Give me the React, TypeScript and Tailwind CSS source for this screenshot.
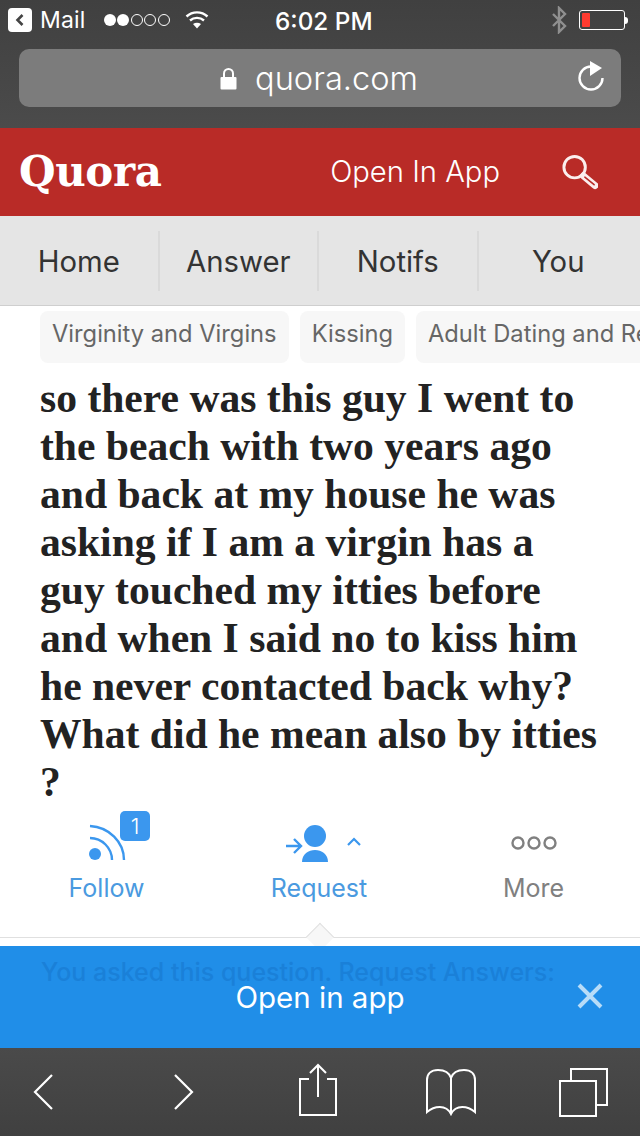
const sans = 'font-["Inter","Liberation_Sans",sans-serif]';

const questionLines = [
  'so there was this guy I went to',
  'the beach with two years ago',
  'and back at my house he was',
  'asking if I am a virgin has a',
  'guy touched my itties before',
  'and when I said no to kiss him',
  'he never contacted back why?',
  'What did he mean also by itties',
  '?',
];

function StatusBar() {
  return (
    <div className="relative flex h-[40px] items-center pl-2 pr-[12px] text-white">
      <div className="flex h-6 w-6 items-center justify-center rounded bg-white">
        <svg width="12" height="14" viewBox="0 0 12 14" fill="none" stroke="#444" strokeWidth="2.6">
          <path d="M8.5 2 L3.5 7 L8.5 12" />
        </svg>
      </div>
      <span className="ml-[8px] text-[23px] leading-none tracking-[0.2px]">Mail</span>
      <div className="ml-[18px] flex items-center gap-[1.5px]">
        <span className="h-[12px] w-[12px] rounded-full bg-white" />
        <span className="h-[12px] w-[12px] rounded-full bg-white" />
        <span className="h-[12px] w-[12px] rounded-full border border-white" />
        <span className="h-[12px] w-[12px] rounded-full border border-white" />
        <span className="h-[12px] w-[12px] rounded-full border border-white" />
      </div>
      <svg className="ml-[15px]" width="24" height="20" viewBox="0 0 24 20" fill="none" stroke="white" strokeWidth="2.4">
        <path d="M1.5 6.5 C7.5 1 16.5 1 22.5 6.5" />
        <path d="M5 10.5 C9 7 15 7 19 10.5" />
        <path d="M12 18.5 L8 14 C10.5 12.4 13.5 12.4 16 14 Z" fill="white" stroke="none" />
      </svg>
      <span className="absolute left-[275px] top-[9px] text-[24.3px] font-medium leading-[24px]">6:02 PM</span>
      <svg className="ml-auto" width="16" height="28" viewBox="0 0 16 28" fill="none" stroke="#8f8f8f" strokeWidth="2.4">
        <path d="M2 8 L14 20 L8 26 L8 2 L14 8 L2 20" />
      </svg>
      <div className="ml-[12px] flex items-center">
        <div className="h-[20px] w-[46px] rounded-[3px] border border-white p-[2px]">
          <div className="h-full w-[8px] rounded-[1px] bg-[#ff3b30]" />
        </div>
        <div className="h-[7px] w-[3px] rounded-r-full bg-white" />
      </div>
    </div>
  );
}

function UrlBar() {
  return (
    <div className="relative mx-[19px] mt-[9px] flex h-[58px] items-center justify-center rounded-[10px] bg-[#7c7c7c] text-white">
      <svg className="mr-[18px]" width="17" height="23" viewBox="0 0 17 23">
        <path d="M4 11 V6.5 a4.5 4.5 0 0 1 9 0 V11" fill="none" stroke="white" strokeWidth="2" />
        <rect x="0.5" y="10" width="16" height="12.5" rx="1" fill="white" />
      </svg>
      <span className="mr-[2px] text-[32.6px] font-light leading-none">quora.com</span>
      <svg className="absolute right-[16px] top-[11px]" width="27" height="32" viewBox="0 0 27 32" fill="none">
        <path d="M13 6.5 A11.5 11.5 0 1 0 24.5 18" stroke="white" strokeWidth="2.4" />
        <path d="M12 1 L24 8 L12 16 Z" fill="white" />
      </svg>
    </div>
  );
}

function RedHeader() {
  return (
    <div className="flex h-[88px] items-center bg-[#b92b27] pl-[19px] pr-[42px] text-white">
      <span className="font-['DejaVu_Serif','Liberation_Serif',serif] text-[42px] font-bold leading-none tracking-[-0.4px]">
        Quora
      </span>
      <span className="ml-auto text-[29.2px] font-light leading-none">Open In App</span>
      <svg className="ml-[61px]" width="37" height="38" viewBox="0 0 38 38" fill="none" stroke="#fbeeee">
        <circle cx="14" cy="14" r="11" strokeWidth="3" />
        <path d="M23 23 L35 33" strokeWidth="7" strokeLinecap="round" />
        <path d="M24.5 24.3 L34 32" stroke="#b92b27" strokeWidth="1.6" strokeLinecap="round" />
      </svg>
    </div>
  );
}

function NavTabs() {
  return (
    <div className="flex h-[90px] items-center border-b border-[#cfcfcf] bg-[#e5e5e5] text-[29.3px] text-[#333]">
      {['Home', 'Answer', 'Notifs', 'You'].map((tab, i) => (
        <div
          key={tab}
          className={`flex h-[60px] w-[159.5px] items-center justify-center pt-[2px] ${i < 3 ? 'border-r-2 border-[#dadada]' : ''}`}
        >
          {tab}
        </div>
      ))}
    </div>
  );
}

function Tags() {
  return (
    <div className="mt-[5px] flex gap-[11px] overflow-hidden pl-[40px] text-[23.7px] leading-none text-[#666]">
      <span className="flex h-[52px] shrink-0 items-center whitespace-nowrap rounded-[8px] bg-[#f7f7f7] px-[12px] pb-[7px]">Virginity and Virgins</span>
      <span className="flex h-[52px] shrink-0 items-center whitespace-nowrap rounded-[8px] bg-[#f7f7f7] px-[12px] pb-[7px]">Kissing</span>
      <span className="flex h-[52px] shrink-0 items-center whitespace-nowrap rounded-[8px] bg-[#f7f7f7] px-[12px] pb-[7px]">Adult Dating and Relationships</span>
    </div>
  );
}

function Actions() {
  return (
    <div className="relative mt-[4px] flex h-[128px] border-b border-[#e0e0e0] text-[25px] leading-none">
      <div className="flex w-[213px] flex-col items-center text-[#4a9ae0]">
        <div className="relative ml-[26px] h-[56px] w-[61px]">
          <svg className="absolute left-0 top-[14px]" width="38" height="40" viewBox="0 0 38 40" fill="none" stroke="#3b97ee" strokeWidth="2.4">
            <circle cx="6" cy="30" r="6" fill="#3b97ee" stroke="none" />
            <path d="M1 14 C13 14 23 24 23 36" />
            <path d="M1 2 C20 3 35 18 35 36" />
          </svg>
          <span className="absolute left-[31px] top-[1px] flex h-[30px] w-[30px] items-center justify-center rounded-[5px] bg-[#3b97ee] text-[22px] font-light text-white">
            1
          </span>
        </div>
        <span className="mt-[10px]">Follow</span>
      </div>
      <div className="flex w-[214px] flex-col items-center text-[#4a9ae0]">
        <svg className="ml-[7px] mt-[14px]" width="78" height="40" viewBox="0 0 78 40" fill="#3b97ee">
          <circle cx="30" cy="12" r="11" />
          <path d="M17 38 C17 22 43 22 43 38 Z" />
          <path d="M1 22 H15 M9 15 L16 22 L9 29" fill="none" stroke="#3b97ee" strokeWidth="2.4" />
          <path d="M63 21 L69 15 L75 21" fill="none" stroke="#3b97ee" strokeWidth="2.2" />
        </svg>
        <span className="mt-[12px] mr-[2px]">Request</span>
      </div>
      <div className="flex w-[213px] flex-col items-center text-[#808080]">
        <svg className="mt-[25px]" width="46" height="16" viewBox="0 0 46 16" fill="none" stroke="#808080" strokeWidth="2.4">
          <circle cx="7" cy="8" r="5.5" />
          <circle cx="23" cy="8" r="5.5" />
          <circle cx="39" cy="8" r="5.5" />
        </svg>
        <span className="mt-[25px]">More</span>
      </div>
      {/* little notch pointing at Request */}
      <div className="absolute bottom-[-10px] left-[310px] h-[20px] w-[20px] rotate-45 border-l border-t border-[#e0e0e0] bg-[#f7f7f7]" />
    </div>
  );
}

function OpenInAppBanner() {
  return (
    <div className="relative mt-[8px] flex h-[102px] items-center justify-center bg-[#208ee8] text-white">
      <span className="absolute left-[41px] top-[14px] text-[25px] font-medium leading-none text-[#1a80d8]">
        You asked this question. Request Answers:
      </span>
      <span className="relative pt-[2px] text-[29.5px] leading-none">Open in app</span>
      <svg className="absolute right-[37px] top-[37px]" width="26" height="26" viewBox="0 0 26 26" stroke="#b7dcf8" strokeWidth="4">
        <path d="M2 2 L24 24 M24 2 L2 24" />
      </svg>
    </div>
  );
}

function SafariToolbar() {
  return (
    <div className="flex h-[88px] items-center bg-gradient-to-b from-[#4a4a4a] to-[#404040] pl-[33px]">
      <svg width="20" height="36" viewBox="0 0 20 36" fill="none" stroke="white" strokeWidth="2.2">
        <path d="M19 1 L2 18 L19 35" />
      </svg>
      <svg className="ml-[121px]" width="20" height="36" viewBox="0 0 20 36" fill="none" stroke="white" strokeWidth="2.2">
        <path d="M1 1 L18 18 L1 35" />
      </svg>
      <svg className="mb-[6px] ml-[105px]" width="38" height="53" viewBox="0 0 38 53" fill="none" stroke="white" strokeWidth="2">
        <path d="M10 16 H1 V52 H37 V16 H28" />
        <path d="M19 34 V2 M11 10 L19 2 L27 10" />
      </svg>
      <svg className="ml-[89px]" width="50" height="48" viewBox="0 0 50 48" fill="none" stroke="white" strokeWidth="2">
        <path d="M25 46 V10 C23 4 17 2 12 2 C5 2 1 6 1 12 V44 C8 38 20 36 25 46 C30 36 42 38 49 44 V12 C49 6 45 2 38 2 C33 2 27 4 25 10" />
      </svg>
      <svg className="ml-[83px]" width="49" height="49" viewBox="0 0 49 49" fill="none" stroke="white" strokeWidth="2">
        <rect x="1" y="13" width="36" height="35" />
        <path d="M12 13 V1 H48 V37 H37" />
      </svg>
    </div>
  );
}

export default function App() {
  return (
    <div className={`flex h-[1136px] w-[640px] flex-col overflow-hidden bg-white ${sans}`}>
      <div className="h-[128px] bg-gradient-to-b from-[#404040] to-[#4b4b4b]">
        <StatusBar />
        <UrlBar />
      </div>
      <RedHeader />
      <NavTabs />
      <Tags />
      <div className="mt-[11px] pl-[40px] font-['Liberation_Serif',serif] text-[41.6px] font-bold leading-[48px] text-[#222]">
        {questionLines.map((line) => (
          <div key={line} className="whitespace-nowrap">
            {line}
          </div>
        ))}
      </div>
      <Actions />
      <OpenInAppBanner />
      <SafariToolbar />
    </div>
  );
}
